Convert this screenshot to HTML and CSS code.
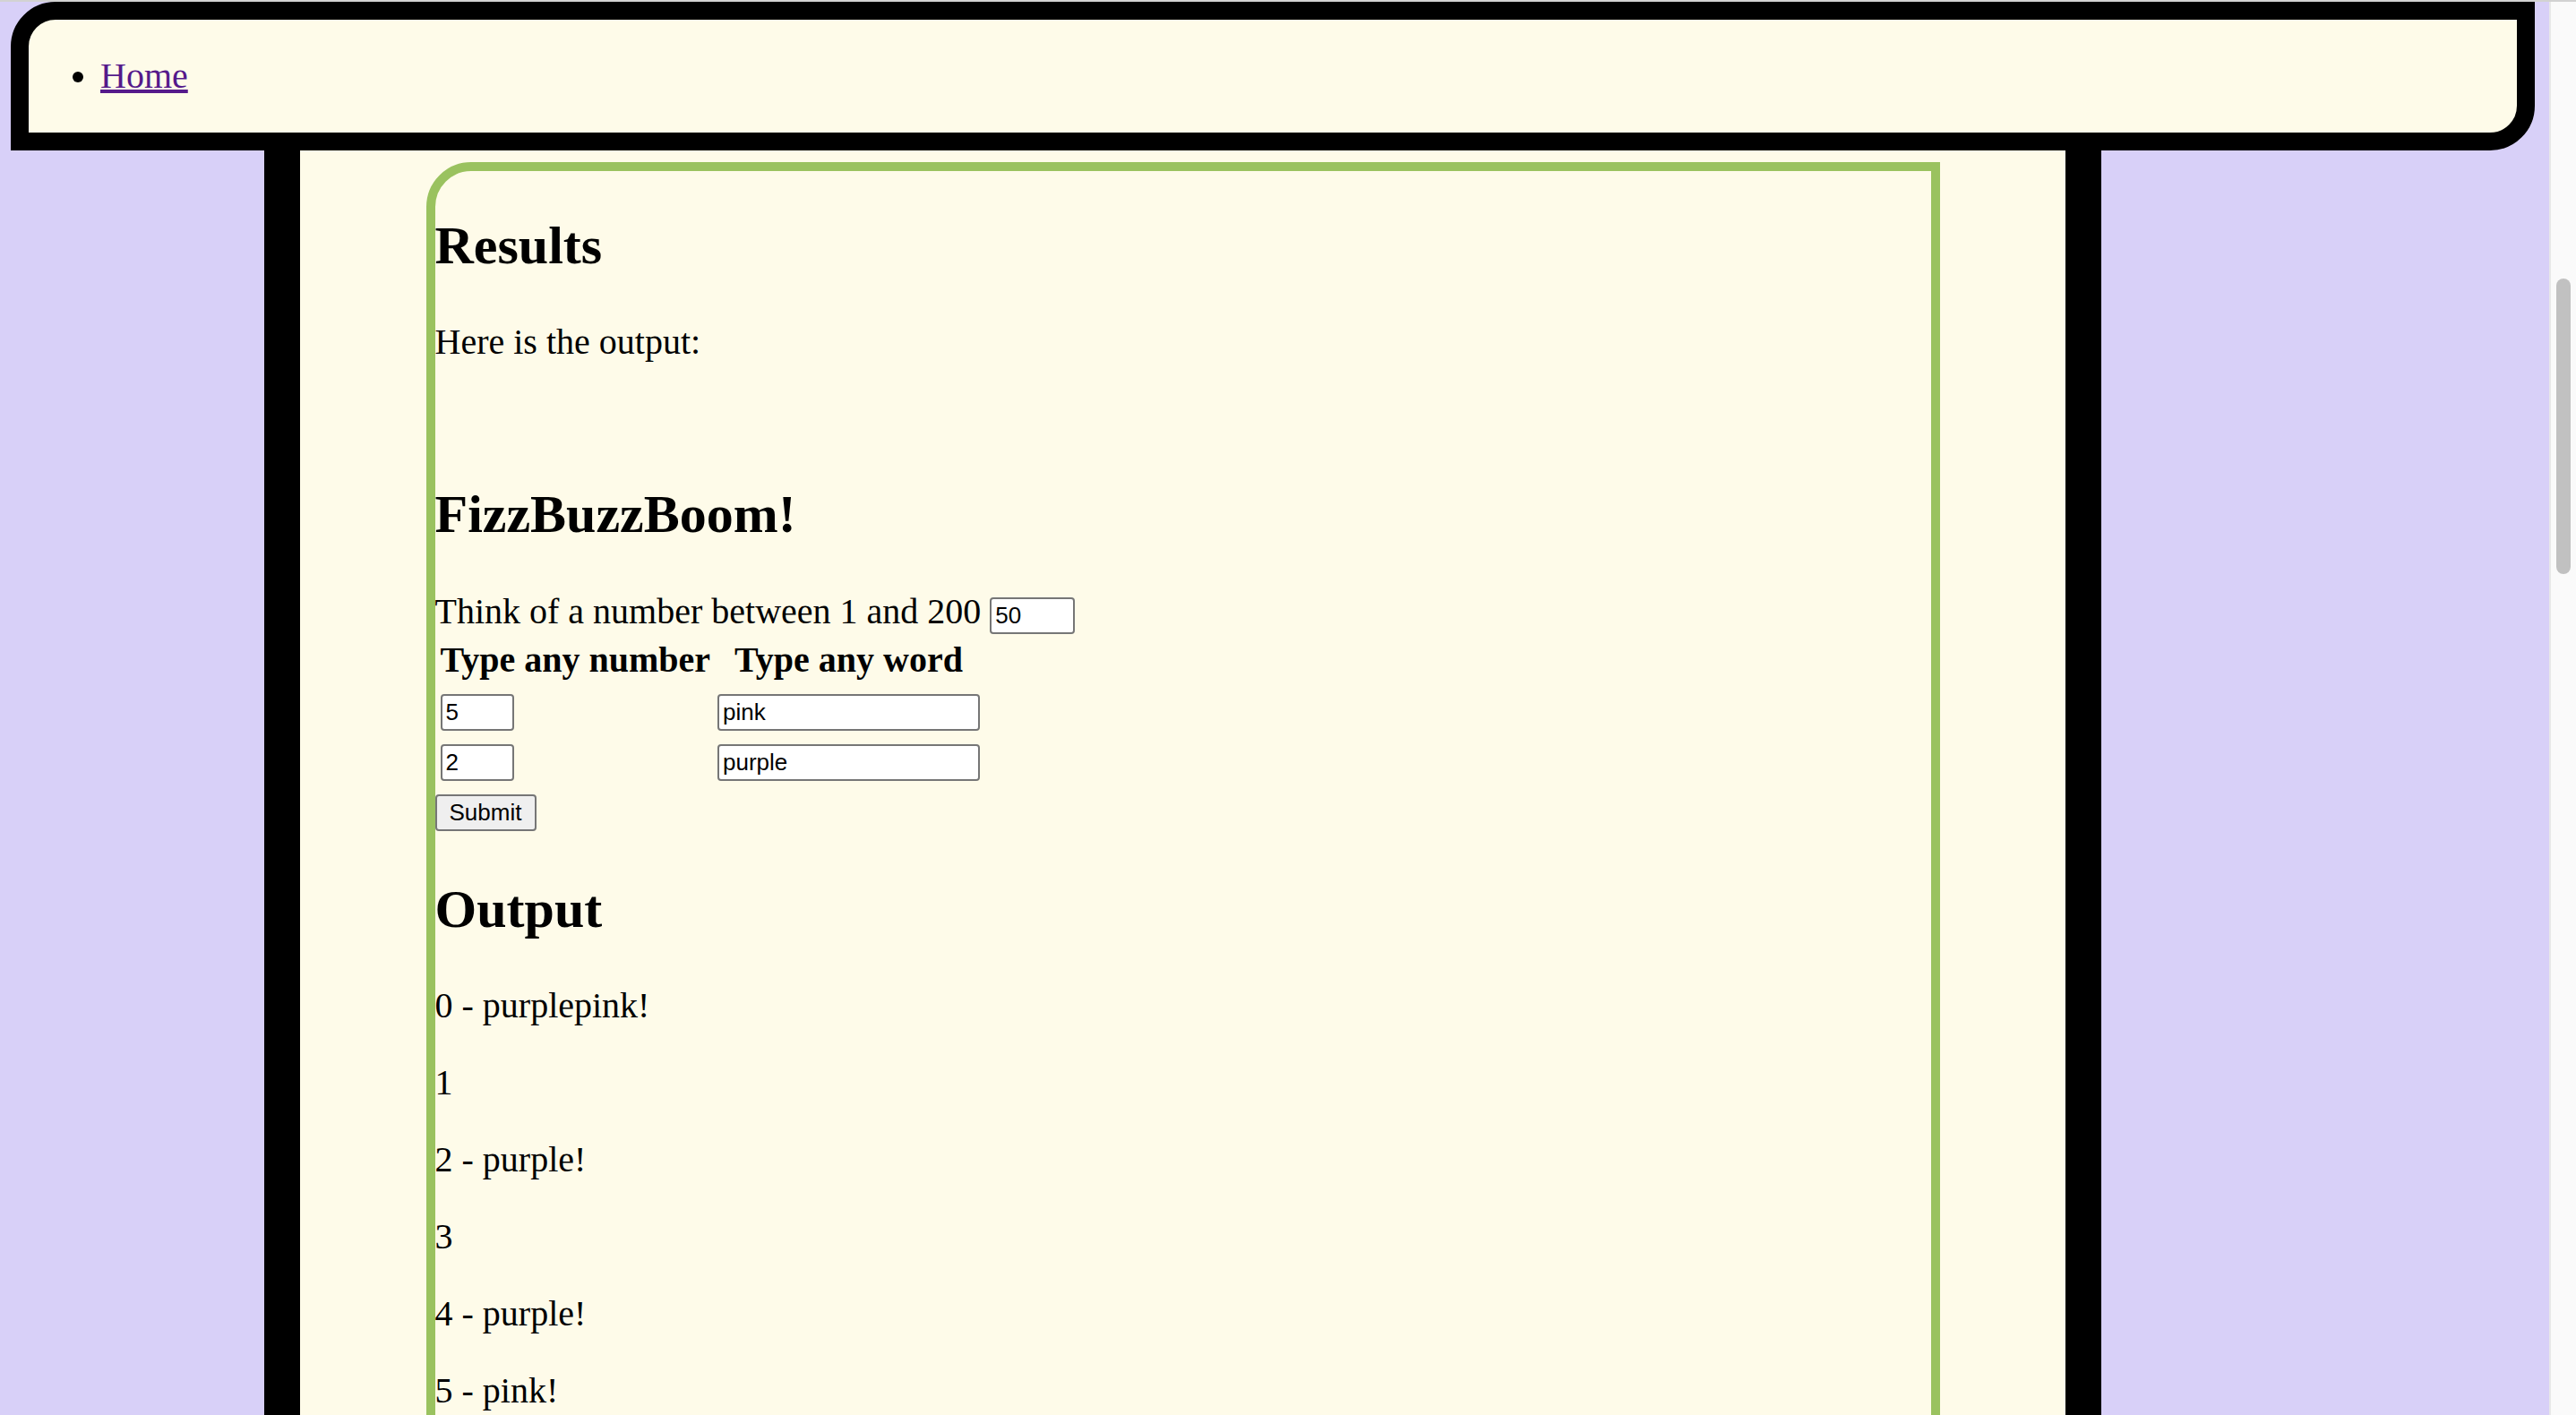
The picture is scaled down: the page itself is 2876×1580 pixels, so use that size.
FILE: index.html
```html
<!DOCTYPE html>
<html lang="en">
<head>
<meta charset="utf-8">
<title>FizzBuzzBoom</title>
<link rel="stylesheet" href="styles.css">
</head>
<body>
<div class="chrome-line"></div>
<div class="window">
  <div class="viewport">
    <header class="nav">
      <ul class="nav-list">
        <li><a class="nav-link" href="#">Home</a></li>
      </ul>
    </header>
    <main class="page">
      <section class="card">
        <h2 class="heading">Results</h2>
        <p class="text">Here is the output:</p>
        <p class="text"><br></p>
        <h2 class="heading">FizzBuzzBoom!</h2>
        <form class="fbb-form">
          Think of a number between 1 and 200 <input class="field field-limit" type="text" value="50">
          <table class="rules">
            <tr><th class="rules-head">Type any number</th><th class="rules-head">Type any word</th></tr>
            <tr><td class="rules-cell"><input class="field field-num" type="text" value="5"></td><td class="rules-cell"><input class="field field-word" type="text" value="pink"></td></tr>
            <tr><td class="rules-cell"><input class="field field-num" type="text" value="2"></td><td class="rules-cell"><input class="field field-word" type="text" value="purple"></td></tr>
          </table>
          <button class="submit" type="button">Submit</button>
        </form>
        <h2 class="heading">Output</h2>
        <p class="text">0 - purplepink!</p>
        <p class="text">1</p>
        <p class="text">2 - purple!</p>
        <p class="text">3</p>
        <p class="text">4 - purple!</p>
        <p class="text">5 - pink!</p>
        <p class="text">6 - purple!</p>
        <p class="text">7</p>
        <p class="text">8 - purple!</p>
        <p class="text">9</p>
        <p class="text">10 - purplepink!</p>
      </section>
    </main>
  </div>
  <div class="scrollbar"><div class="scroll-thumb"></div></div>
</div>
</body>
</html>
```

FILE: styles.css
```css
html, body {
  margin: 0;
  padding: 0;
  height: 100%;
  overflow: hidden;
}

body {
  font-family: "Liberation Serif", "Times New Roman", serif;
  font-size: 40px;
  line-height: 1.15;
  color: #000;
  background: #d8d0f8;
  display: flex;
  flex-direction: column;
}

.chrome-line {
  height: 2px;
  background: #d2d2d2;
  flex: none;
}

.window {
  flex: 1;
  display: flex;
  min-height: 0;
}

.viewport {
  flex: 1;
  min-width: 0;
  background: #d8d0f8;
  overflow: hidden;
  display: flex;
  flex-direction: column;
}

/* header */
.nav {
  flex: none;
  margin: 0 16px 0 12px;
  background: #fefbe9;
  border: 20px solid #000;
  border-radius: 50px 0 50px 0;
}

.nav-list {
  margin: 40px 0;
  padding-left: 80px;
  list-style: disc;
}

.nav-link {
  color: #551a8b;
  text-decoration: underline;
}

/* main column */
.page {
  flex: 1;
  margin-left: 295px;
  width: 2051px;
  box-sizing: border-box;
  background: #fefbe9;
  border-left: 40px solid #000;
  border-right: 40px solid #000;
  padding-top: 13px;
}

.card {
  width: 1690px;
  box-sizing: border-box;
  margin: 0 auto;
  border: 10px solid #9ac25f;
  border-radius: 50px 0 0 0;
  min-height: 2000px;
}

.heading {
  font-size: 60px;
  font-weight: bold;
  margin: 49px 0 50px;
}

.text {
  margin: 40px 0;
}

/* form */
.fbb-form {
  margin: 0;
  padding: 1px 0 4px;
}

.field {
  box-sizing: border-box;
  height: 41px;
  padding: 0 4px;
  border: 2px solid #767676;
  border-radius: 4px;
  background: #fff;
  color: #000;
  font-family: "Liberation Sans", Arial, sans-serif;
  font-size: 26px;
  line-height: normal;
  vertical-align: baseline;
}

.field-limit { width: 95px; }
.field-num { width: 82px; }
.field-word { width: 293px; }

.rules {
  border-collapse: separate;
  border-spacing: 4px;
  margin: 0 0 2px;
}

.rules-head {
  padding: 2px;
  font-weight: bold;
  text-align: center;
}

.rules-cell {
  padding: 2px;
  text-align: left;
}

.submit {
  box-sizing: border-box;
  width: 113px;
  height: 41px;
  padding: 0 6px;
  border: 2px solid #767676;
  border-radius: 4px;
  background: #efefef;
  color: #000;
  font-family: "Liberation Sans", Arial, sans-serif;
  font-size: 26px;
  line-height: normal;
  vertical-align: baseline;
}

/* scrollbar */
.scrollbar {
  flex: none;
  width: 28px;
  border-left: 2px solid #e8e8e8;
  background: #fafafa;
  padding-top: 309px;
}

.scroll-thumb {
  width: 16px;
  height: 330px;
  margin-left: 6px;
  border-radius: 8px;
  background: #c1c1c1;
}
```
